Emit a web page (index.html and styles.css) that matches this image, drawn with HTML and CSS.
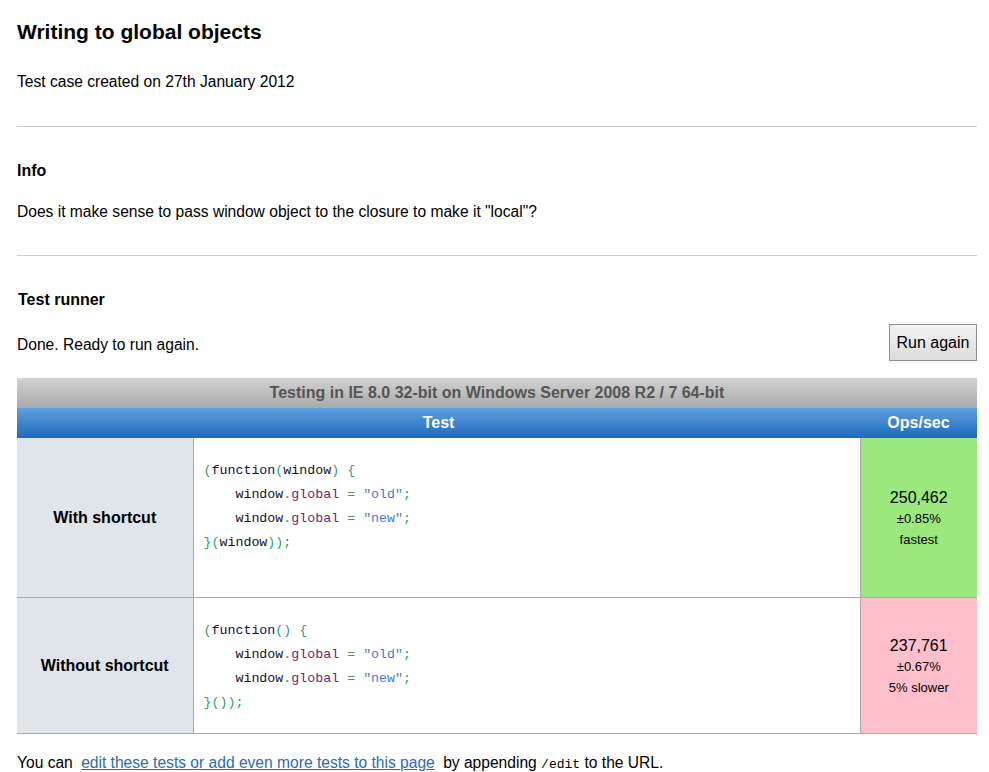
FILE: index.html
```html
<!DOCTYPE html>
<html>
<head>
<meta charset="utf-8">
<title>Writing to global objects</title>
<link rel="stylesheet" href="styles.css">
</head>
<body>
<div class="page">
  <h1 class="title">Writing to global objects</h1>
  <p class="meta">Test case created on 27th January 2012</p>
  <hr class="rule rule-first">
  <h2 class="section">Info</h2>
  <p class="info">Does it make sense to pass window object to the closure to make it "local"?</p>
  <hr class="rule rule-second">
  <h2 class="section section-runner">Test runner</h2>
  <div class="status-row">
    <span class="status">Done. Ready to run again.</span>
    <button class="run-btn">Run again</button>
  </div>
  <div class="caption">Testing in IE 8.0 32-bit on Windows Server 2008 R2 / 7 64-bit</div>
  <table class="results">
    <colgroup>
      <col class="c-title">
      <col class="c-code">
      <col class="c-ops">
    </colgroup>
    <thead>
      <tr>
        <th class="h-test" colspan="2">Test</th>
        <th class="h-ops">Ops/sec</th>
      </tr>
    </thead>
    <tbody>
      <tr>
        <td class="name">With shortcut</td>
        <td class="code"><pre><span class="pun">(</span><span class="kwd">function</span><span class="pun">(</span><span class="pln">window</span><span class="pun">)</span> <span class="pun">{</span>
    <span class="pln">window</span><span class="pun">.</span><span class="prop">global</span> <span class="op">=</span> <span class="str">"old"</span><span class="pun">;</span>
    <span class="pln">window</span><span class="pun">.</span><span class="prop">global</span> <span class="op">=</span> <span class="str">"new"</span><span class="pun">;</span>
<span class="pun">}(</span><span class="pln">window</span><span class="pun">));</span>
 </pre></td>
        <td class="ops fastest"><span class="num">250,462</span><span class="small">±0.85%</span><span class="small">fastest</span></td>
      </tr>
      <tr>
        <td class="name">Without shortcut</td>
        <td class="code"><pre><span class="pun">(</span><span class="kwd">function</span><span class="pun">()</span> <span class="pun">{</span>
    <span class="pln">window</span><span class="pun">.</span><span class="prop">global</span> <span class="op">=</span> <span class="str">"old"</span><span class="pun">;</span>
    <span class="pln">window</span><span class="pun">.</span><span class="prop">global</span> <span class="op">=</span> <span class="str">"new"</span><span class="pun">;</span>
<span class="pun">}());</span></pre></td>
        <td class="ops slower"><span class="num">237,761</span><span class="small">±0.67%</span><span class="small">5% slower</span></td>
      </tr>
    </tbody>
  </table>
  <p class="footer">You can <a class="edit-link" href="#">edit these tests or add even more tests to this page</a> by appending <code class="mono">/edit</code> to the URL.</p>
</div>
</body>
</html>
```
FILE: styles.css
```css
html, body {
  margin: 0;
  padding: 0;
  background: #fff;
}
body {
  font-family: "Liberation Sans", Arial, sans-serif;
  font-size: 15.6px;
  color: #000;
}
.page {
  width: 960px;
  margin-left: 17px;
  padding-top: 20px;
}
.title {
  margin: 0;
  font-size: 21px;
  line-height: 24px;
  font-weight: bold;
}
.meta {
  margin: 28px 0 0;
  line-height: 20px;
}
.rule {
  border: 0;
  border-top: 1px solid #cccccc;
  height: 0;
  margin: 0;
}
.rule-first { margin-top: 34px; }
.rule-second { margin-top: 33px; }
.section {
  margin: 34px 0 0;
  font-size: 16px;
  line-height: 20px;
  font-weight: bold;
}
.section-runner { margin-left: 1px; }
.info {
  margin: 21px 0 0;
  line-height: 20px;
}
.status-row {
  margin-top: 14px;
  display: flex;
  justify-content: space-between;
  align-items: center;
  height: 37px;
}
.status {
  line-height: 20px;
  padding-top: 5px;
}
.run-btn {
  width: 88px;
  height: 37px;
  font-family: "Liberation Sans", Arial, sans-serif;
  font-size: 16px;
  color: #000;
  border: 1px solid #8f8f8f;
  border-radius: 0;
  background: linear-gradient(#f4f4f4, #dcdcdc);
  padding: 0;
}
.caption {
  margin-top: 17px;
  height: 30px;
  line-height: 30px;
  text-align: center;
  background: linear-gradient(#d2d2d2, #a9a9a9);
  color: #555;
  font-weight: bold;
  font-size: 16px;
}
.results {
  width: 960px;
  border-collapse: collapse;
  table-layout: fixed;
}
.c-title { width: 176px; }
.c-ops { width: 117px; }
.results th {
  height: 30px;
  padding: 0;
  color: #fff;
  font-weight: bold;
  font-size: 16px;
  background: linear-gradient(#60a0e0, #1d69bd);
  text-align: center;
}
.results td {
  border-bottom: 1px solid #aaaaaa;
  padding: 0;
}
.name {
  background: #dfe5eb;
  text-align: center;
  font-weight: bold;
  font-size: 16px;
  border-right: 1px solid #aaaaaa;
}
.results td.code {
  padding: 21px 10px 18px;
  vertical-align: top;
  background: #fff;
}
.code pre {
  margin: 0;
  font-family: "Liberation Mono", "Courier New", monospace;
  font-size: 13.3px;
  line-height: 24px;
}
.pun { color: #2aa06c; }
.kwd { color: #101060; }
.pln { color: #101028; }
.prop { color: #7a1a78; }
.op { color: #33aa33; }
.str { color: #3b7bd8; }
.ops {
  text-align: center;
  border-left: 1px solid #aaaaaa;
}
.fastest { background: #9ae87e; }
.slower { background: #ffc0cb; }
.num {
  display: block;
  font-size: 16px;
  line-height: 21px;
  padding-top: 2px;
}
.small {
  display: block;
  font-size: 13px;
  line-height: 21px;
}
.footer {
  margin: 19px 0 0;
  line-height: 20px;
}
.edit-link {
  color: #2b6cb0;
  text-decoration: underline;
  margin: 0 4px;
}
.mono {
  font-family: "Liberation Mono", "Courier New", monospace;
  font-size: 13px;
}
```
